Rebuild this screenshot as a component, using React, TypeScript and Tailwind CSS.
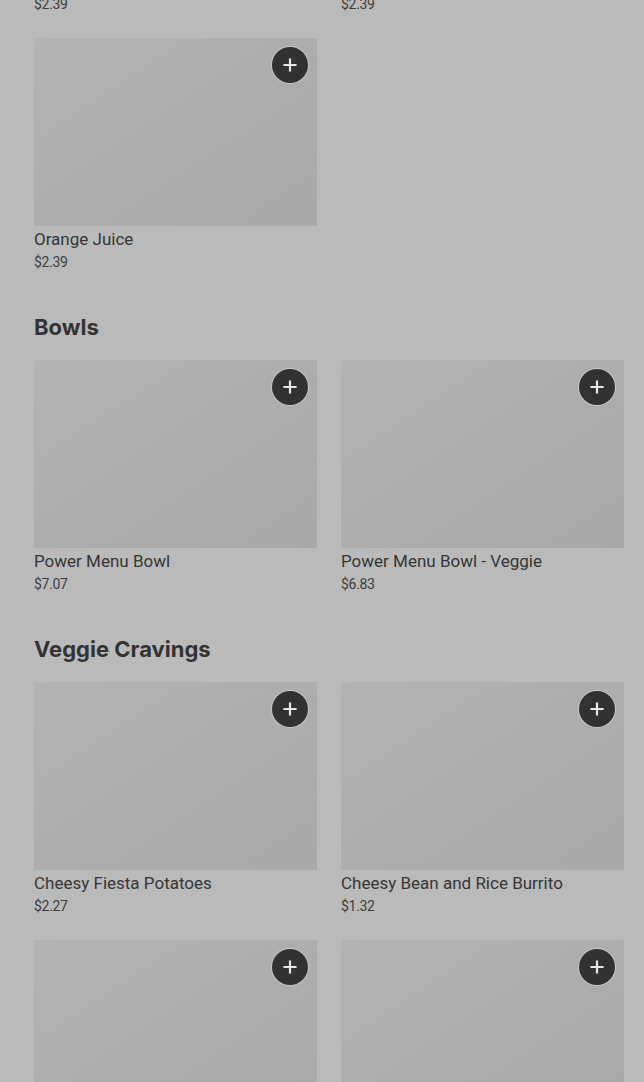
import React from "react";

type Item = { name: string; price: string };

const PlusButton = () => (
  <button className="absolute right-[9px] top-[9px] flex h-[36px] w-[36px] items-center justify-center rounded-full bg-[#323232] shadow-[0_0_0_1px_rgba(215,215,215,0.6)]">
    <svg width="14" height="14" viewBox="0 0 14 14">
      <path d="M7 1.5v11M1.5 7h11" stroke="#e6e6e6" strokeWidth="2.2" strokeLinecap="square" />
    </svg>
  </button>
);

const Card = ({ item }: { item: Item }) => (
  <div className="flex flex-col">
    <div className="relative h-[188px] w-full bg-gradient-to-br from-[#b3b3b3] via-[#adadad] to-[#a9a9a9]">
      <PlusButton />
    </div>
    <div className="pt-[1px] text-[17px] leading-[24px] text-[#363636]" style={{ fontFamily: "Roboto, 'Liberation Sans', sans-serif" }}>
      {item.name}
    </div>
    <div className="text-[14px] leading-[22px] tracking-[-0.3px] text-[#3e3e3e]" style={{ fontFamily: "Roboto, 'Liberation Sans', sans-serif" }}>
      {item.price}
    </div>
  </div>
);

const Grid = ({ items }: { items: Item[] }) => (
  <div className="grid grid-cols-2 gap-x-[24px] gap-y-[23px]">
    {items.map((it, i) => (
      <Card key={i} item={it} />
    ))}
  </div>
);

const Section = ({ title, items }: { title: string; items: Item[] }) => (
  <section className="mt-[38px]">
    <h2
      className="mb-[17px] text-[22px] font-bold leading-[32px] text-[#333333]"
      style={{ fontFamily: "Inter, 'Liberation Sans', sans-serif" }}
    >
      {title}
    </h2>
    <Grid items={items} />
  </section>
);

export default function App() {
  return (
    <div className="h-[1082px] w-[644px] overflow-hidden bg-[#bababa]">
      <div className="mt-[-220px] pl-[34px] pr-[20px]">
        <Grid
          items={[
            { name: "Apple Juice", price: "$2.39" },
            { name: "Coffee", price: "$2.39" },
            { name: "Orange Juice", price: "$2.39" },
          ]}
        />
        <Section
          title="Bowls"
          items={[
            { name: "Power Menu Bowl", price: "$7.07" },
            { name: "Power Menu Bowl - Veggie", price: "$6.83" },
          ]}
        />
        <Section
          title="Veggie Cravings"
          items={[
            { name: "Cheesy Fiesta Potatoes", price: "$2.27" },
            { name: "Cheesy Bean and Rice Burrito", price: "$1.32" },
            { name: "Bean Burrito", price: "$1.89" },
            { name: "Black Bean Chalupa Supreme", price: "$4.19" },
          ]}
        />
      </div>
    </div>
  );
}
